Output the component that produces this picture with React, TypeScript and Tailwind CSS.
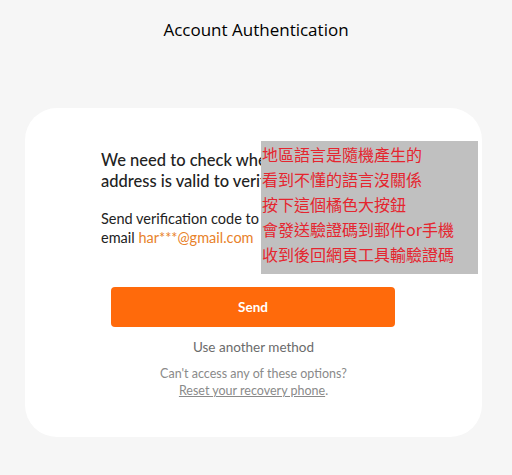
import React from 'react';

const notes = [
    '地區語言是隨機產生的',
    '看到不懂的語言沒關係',
    '按下這個橘色大按鈕',
    '會發送驗證碼到郵件or手機',
    '收到後回網頁工具輸驗證碼',
];

const App = () => {
    return (
        <div className="relative min-h-[475px] bg-[#f6f6f6] font-['Open_Sans',sans-serif] overflow-hidden">
            <h1 className="pt-[19px] text-center text-[17px] leading-[22px] font-medium text-black">
                Account Authentication
            </h1>

            <div className="mx-[25px] mt-[67px] h-[329px] w-[457px] rounded-[32px] bg-white px-[76px] pt-[42px] font-['Lato',sans-serif]">
                <p className="text-[16.5px] leading-[21px] font-medium text-[#222]">
                    We need to check whether your email address is valid to verify your identity.
                </p>
                <p className="mt-[17px] text-[14.5px] leading-[19px] text-[#222]">
                    Send verification code to your
                    <br />
                    email <span className="text-[#e8822a]">har***@gmail.com</span>
                </p>

                <button className="mx-[10px] mt-[40px] flex h-[40px] w-[284px] items-center justify-center rounded-[4px] bg-[#ff6a0b] text-[13.5px] font-bold text-white">
                    Send
                </button>

                <div className="mt-[11px] text-center text-[13.5px] leading-[18px] text-[#6b6b6b]">
                    Use another method
                </div>

                <div className="mt-[9px] text-center text-[12.5px] leading-[17px] text-[#8a8a8a]">
                    Can't access any of these options?
                    <br />
                    <a className="underline">Reset your recovery phone</a>.
                </div>
            </div>

            {/* note pasted over the card */}
            <div className="absolute left-[261px] top-[141px] h-[133px] w-[217px] bg-[#c0c0c0] pl-[1px] pt-[1px] font-['Noto_Sans_CJK_TC',sans-serif] text-[16px] leading-[25px] text-[#e5252f]">
                {notes.map((line, i) => (
                    <React.Fragment key={line}>
                        {i > 0 && <br />}
                        {line}
                    </React.Fragment>
                ))}
            </div>
        </div>
    );
};

export default App;
